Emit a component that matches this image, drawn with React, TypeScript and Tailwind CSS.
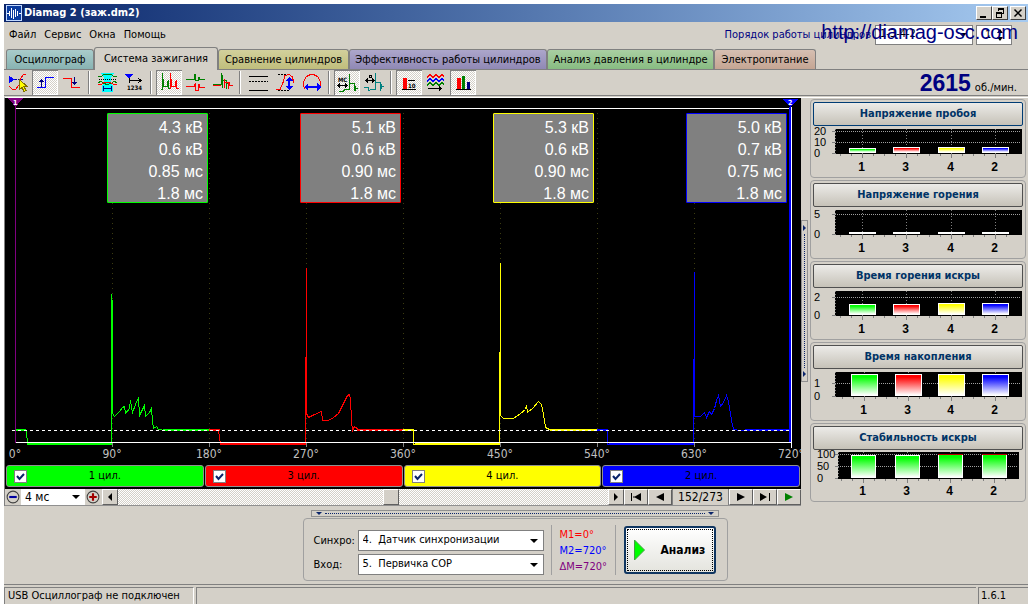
import { useState, type ReactNode } from 'react'

const CYLINDERS = [
  {
    id: 1, color: '#00ff00', box: 'border-[#00ff00]', bar: 'bg-[#00ff00]', spike: 'M106.500 272V346M107.500 207V315',
    values: ['4.3 кВ', '0.6 кВ', '0.85 мс', '1.8 мс'],
    wave: '10,332 21,332 22,346 106,346 106,272 106,346 106,196 107,207 107,315 109,318 114,313 117,309 119,308 120,315 124,310 125,302 127,314 130,306 133,299 134,317 137,311 139,307 140,318 144,314 146,310 147,322 148,330 151,328 153,331 160,332 204,332',
  },
  {
    id: 3, color: '#ff0000', box: 'border-[#ff0000]', bar: 'bg-[#ff0000]', spike: 'M300.500 259V346M301.500 259V315',
    values: ['5.1 кВ', '0.6 кВ', '0.90 мс', '1.8 мс'],
    wave: '204,332 213,332 215,346 300,346 300,259 301,259 301,169 301,315 303,319 309,316 316,313 317,322 323,322 328,319 333,315 338,305 342,297 344,296 345,300 346,322 347,332 349,328 353,331 398,332',
  },
  {
    id: 4, color: '#ffff00', box: 'border-[#ffff00]', bar: 'bg-[#ffff00]', spike: 'M494.500 254V346M495.500 254V317',
    values: ['5.3 кВ', '0.6 кВ', '0.90 мс', '1.8 мс'],
    wave: '398,332 408,332 408,346 494,346 494,256 495,256 495,164 495,317 498,320 508,320 515,315 520,311 521,307 522,314 528,309 533,303 536,306 538,316 540,329 546,332 592,332',
  },
  {
    id: 2, color: '#0000ff', box: 'border-[#0000ff]', bar: 'bg-[#0000ff]', spike: 'M688.500 261V346M689.500 261V318',
    values: ['5.0 кВ', '0.7 кВ', '0.75 мс', '1.8 мс'],
    wave: '592,332 602,332 602,346 688,346 688,262 689,262 689,173 689,318 695,318 699,314 701,319 704,313 706,316 709,310 711,302 713,297 715,308 718,304 721,297 723,303 726,322 728,331 735,332 785,332',
  },
]

const TABS = [
  { label: 'Осциллограф', cls: 'w-[88px] bg-linear-to-b from-[#a9cccb] to-[#88b3b2]' },
  { label: 'Система зажигания', cls: 'w-[124px] bg-[#d4d0c8]', active: true },
  { label: 'Сравнение цилиндров', cls: 'w-[131px] bg-linear-to-b from-[#d2d09c] to-[#c0be7c]' },
  { label: 'Эффективность работы цилиндров', cls: 'w-[198px] bg-linear-to-b from-[#aca6cb] to-[#9089b5]' },
  { label: 'Анализ давления в цилиндре', cls: 'w-[167px] bg-linear-to-b from-[#a9cfa2] to-[#88bc82]' },
  { label: 'Электропитание', cls: 'w-[102px] bg-linear-to-b from-[#d6bfb2] to-[#c5a593]' },
]

const GAUGES = [
  { title: 'Напряжение пробоя', active: true, left: 22, top: 3, bottom: 28, right: 209, scale: [['20', 5], ['10', 16], ['0', 27]], xs: [36, 80, 125, 169], tops: [22, 21, 21, 21], w: 27 },
  { title: 'Напряжение горения', left: 22, top: 3, bottom: 28, right: 209, scale: [['5', 7], ['0', 27]], xs: [36, 80, 125, 169], tops: [25, 25, 25, 25], w: 27 },
  { title: 'Время горения искры', left: 22, top: 3, bottom: 28, right: 209, scale: [['2', 9], ['0', 27]], xs: [36, 80, 125, 169], tops: [16, 16, 15, 15], w: 27 },
  { title: 'Время накопления', left: 22, top: 3, bottom: 28, right: 209, scale: [['1', 14], ['0', 27]], xs: [38, 82, 125, 169], tops: [5, 5, 5, 5], w: 27 },
  { title: 'Стабильность искры', green: true, left: 25, top: 2, bottom: 29, right: 206, scale: [['100', 4], ['50', 16], ['0', 28]], xs: [38, 82, 125, 169], tops: [5, 5, 4, 4], w: 25 },
] as { title: string; active?: boolean; green?: boolean; left: number; top: number; bottom: number; right: number; scale: [string, number][]; xs: number[]; tops: number[]; w: number }[]

const RAISED = 'border border-t-white border-l-white border-r-[#606060] border-b-[#606060] bg-[#d4d0c8]'
const DITHER = 'bg-[repeating-conic-gradient(#ffffff_0_25%,#d4d0c8_0_50%)] bg-[length:2px_2px]'

// toolbar glyphs, drawn in a 26x25 box
const TOOLS: { name: string; pressed?: boolean; art: ReactNode }[][] = [
  [
    {
      name: 'Курсор',
      art: (
        <>
          <path d="M4 6v7l6-3.500z" fill="#0000ff" />
          <path d="M10 9.500h9" stroke="#0000a0" strokeDasharray="2 1" />
          <path d="M4 16l3 3h4l3-4 2-7 2-3 3-1" stroke="#ff0000" />
          <path d="M14.500 9.500v10l2.500-2 2 4 2-1-2-4h3z" fill="#ffff00" stroke="#807000" />
        </>
      ),
    },
    { name: 'Фронт', pressed: true, art: <><path d="M5 17.500h8.500v-10H22" stroke="#0000ff" /><path d="M9.500 17V9M7 11.500h5M8 10.500h3" stroke="#000080" /></> },
    { name: 'Спад', art: <><path d="M4 8.500h8.500v9H21" stroke="#ff0000" /><path d="M15.500 7v8M13 12.500h5M14 13.500h3" stroke="#000080" /></> },
  ],
  [
    {
      name: 'Фаза',
      art: (
        <>
          <path d="M7 3h13l-3 5v5l2 3v6H8v-6l2-3V8z" fill="#00ffff" />
          <path d="M4 6.500h3l3-2h7l3 2h3M4 12.500l3-1 3 2 3 1 4-1 3-2 3 1" stroke="#008000" />
          <path d="M4 14.500h3l3-2h6l4 2h3" stroke="#ff0000" />
          <path d="M5 9.500h18" stroke="#000" strokeDasharray="1 1" />
          <path d="M9.500 16v5M17.500 16v5M9 18.500h9" stroke="#000080" />
        </>
      ),
    },
    {
      name: 'Порядок',
      art: (
        <>
          <path d="M4 4h8L8 9z" fill="#0000ff" />
          <path d="M8.500 8v5M8 10.500h12M17 8l3 2.500-3 2.500" stroke="#000" />
          <text x="6" y="20" fontSize="6" fontWeight="bold" fill="#000">1234</text>
        </>
      ),
    },
  ],
  [
    {
      name: 'Парад', pressed: true,
      art: <><path d="M5 19.500h1.500V3M7.500 9v8M8 16.500h3v-6M12.500 10v9M12 18.500h2" stroke="#008000" /><path d="M14.500 19V3M15.500 9v8M16 16.500h3v-6M20.500 10v8M20 18.500h3" stroke="#ff0000" /></>,
    },
    { name: 'Растр', art: <><path d="M3 9.500h8.500V4M12.500 4v7M13 10.500h2v-4M16.500 7v3M16 9.500h6" stroke="#008000" /><path d="M3 16.500h8.500v-3M12.500 13v8M13 20.500h2v-7M16.500 14v3M16 17.500h6" stroke="#ff0000" /></> },
    { name: 'Наложение', art: <><path d="M3 14.500h8.500V3M12.500 5v13M13 10.500h3v8M16 13.500h4" stroke="#008000" /><path d="M3 15.500h8M14.500 9v9M15 12.500h3v6M19.500 12v4M19 15.500h4" stroke="#ff0000" /></> },
  ],
  [
    { name: 'Линии', art: <><path d="M4 6.500h19M4 20.500h19" stroke="#000" /><path d="M4 11.500h19" stroke="#000" strokeDasharray="2 1" /></> },
    {
      name: 'Высота',
      art: <><path d="M6 4.500h12M6 20.500h12" stroke="#000" strokeDasharray="2 1" /><path d="M4 19.500h4l3-7 2-7 4-1 3 2 2 6" stroke="#ff0000" /><path d="M17 8v11" stroke="#0000ff" strokeWidth="2" /><path d="M13 11l4-4 4 4zM13 16l4 4 4-4z" fill="#0000ff" /></>,
    },
    {
      name: 'Ширина',
      art: <><path d="M6 18.500l-1.500-2v-5l3-5 4-2h3l4 2 3 5v5l-1.500 2" stroke="#ff0000" /><path d="M7 17h14" stroke="#0000ff" strokeWidth="2" /><path d="M9 13l-4 4 4 4zM18 13l4 4-4 4z" fill="#0000ff" /></>,
    },
  ],
  [
    {
      name: 'Метки мс', pressed: true,
      art: <><text x="4" y="12" fontSize="6" fontWeight="bold" fill="#000">МС</text><path d="M4 15.500h9M6 13.500l-2 2 2 2M11 13.500l2 2-2 2" stroke="#000" /><path d="M5 21.500h4l2-2h4.500V4v9M16 13.500h4v7M20 18.500h4M21.500 16v5" stroke="#008000" /></>,
    },
    {
      name: 'Метки градусы',
      art: <><path d="M5 10.500h8M7 8.500l-2 2 2 2M11 8.500l2 2-2 2M8 5.500h2v2H8z" stroke="#000" /><path d="M3 17.500h4v3l4-1h3.500V3v14M15 12.500h4v8M19 16.500h4M20.500 14v5" stroke="#008080" /></>,
    },
  ],
  [
    { name: 'Значения', pressed: true, art: <><path d="M7 8h4v11H7z" fill="#ff0000" /><path d="M6 19.500h14M12 10.500h7" stroke="#000" /><text x="12" y="18" fontSize="6" fontWeight="bold" fill="#000">10</text></> },
    {
      name: 'Тренды',
      art: <><path d="M4 7.500l3-3 3 3 3-3 3 3 3-3 2 2" stroke="#ff0000" /><path d="M4 11.500l3-3 3 3 3-3 3 3 3-3 2 2" stroke="#0000ff" /><path d="M4 15.500l3-3 3 3 3-3 3 3 3-3 2 2" stroke="#008000" /><path d="M5 18.500h13M16 16.500l2 2-2 2" stroke="#000" /></>,
    },
    { name: 'Гистограммы', pressed: true, art: <><path d="M7 8h4v11H7z" fill="#ff0000" /><path d="M12 6h3v13h-3z" fill="#008000" /><path d="M17 12h3v7h-3z" fill="#000080" /><path d="M6 19.500h15" stroke="#000" /></> },
  ],
]

function Combo({ label, options, className }: { label: string; options: string[]; className: string }) {
  return (
    <div className={`relative bg-white ${className}`}>
      <select aria-label={label} className="h-full w-full appearance-none bg-transparent pl-1 pb-px outline-none">
        {options.map(o => <option key={o}>{o}</option>)}
      </select>
      <svg viewBox="0 0 8 4" className="pointer-events-none absolute right-[5px] top-1/2 h-1 w-2 -translate-y-1/2"><path d="M0 0h8L4 4z" /></svg>
    </div>
  )
}

function TitleBar() {
  const btn = 'flex h-[14px] w-4 items-center justify-center border border-t-white border-l-white border-r-[#404040] border-b-[#404040] bg-[#d4d0c8]'
  return (
    <header className="flex h-[18px] items-center bg-linear-to-r from-[#0a246a] to-[#a6caf0] px-[2px]">
      <svg viewBox="0 0 16 16" className="h-4 w-4" shapeRendering="crispEdges">
        <path d="M.5.5h15v15H.5z" fill="#0a3ca0" stroke="#c0d8ff" />
        <path d="M1 8.500h2M3.500 6v5M5.500 3v10M7.500 5v9M9.500 4v8M11.500 6v5M13 8.500h2" stroke="#fff" />
      </svg>
      <h1 className="ml-[2px] flex-1 text-[11px] font-bold text-white">Diamag 2 (заж.dm2)</h1>
      <button aria-label="Свернуть" className={btn}><svg viewBox="0 0 10 10" className="h-[10px] w-[10px]"><path d="M1 8h6v2H1z" /></svg></button>
      <button aria-label="Восстановить" className={btn}>
        <svg viewBox="0 0 10 10" className="h-[10px] w-[10px]" fill="none" stroke="#000" shapeRendering="crispEdges"><path d="M3.500 3V.5h5v5H7M3 1.500h6M1.500 4.500h5v5h-5zM1 5.500h6" /></svg>
      </button>
      <button aria-label="Закрыть" className={`ml-[2px] ${btn}`}>
        <svg viewBox="0 0 10 10" className="h-[10px] w-[10px]" stroke="#000" strokeWidth="1.500"><path d="M1.500 1.500l7 7M8.500 1.500l-7 7" /></svg>
      </button>
    </header>
  )
}

function MenuBar() {
  return (
    <div className="relative flex h-[25px] items-center pl-[5px] pr-4">
      <nav className="flex flex-1 gap-2">
        {['Файл', 'Сервис', 'Окна', 'Помощь'].map(m => <button key={m}>{m}</button>)}
      </nav>
      <span className="mr-1 text-[#000080]">Порядок работы цилиндров</span>
      <Combo label="Порядок работы цилиндров" options={['1-3-4-2', '1-2-4-3']} className="h-5 w-[98px] border border-[#808080]" />
      <div className="ml-[3px] flex h-5 w-9 items-center border border-[#808080] bg-white">
        <input aria-label="Цилиндр" defaultValue="1" className="w-5 pl-2 outline-none" />
        <svg viewBox="0 0 6 14" className="h-[14px] w-[6px]"><path d="M0 5l3-4 3 4zM0 9l3 4 3-4z" /></svg>
      </div>
      <a href="http://diamag-osc.com" className="absolute right-[10px] top-0 font-['Liberation_Sans',sans-serif] text-[20px] leading-5 text-[#000080]">http://diamag-osc.com</a>
    </div>
  )
}

function Tabs() {
  const [current, setCurrent] = useState(1)
  return (
    <div role="tablist" className="flex h-[22px] items-end pl-[2px]">
      {TABS.map((t, i) => (
        <button
          key={t.label}
          role="tab"
          aria-selected={current === i}
          onClick={() => setCurrent(i)}
          className={`shrink-0 whitespace-nowrap rounded-t-[3px] border border-b-0 border-[#808080] ${t.active ? 'relative z-10 -mb-px h-[23px] pb-px' : 'h-5'} ${t.cls}`}
        >
          {t.label}
        </button>
      ))}
    </div>
  )
}

function Toolbar() {
  return (
    <div className="flex h-[27px] items-center border-y border-[#808080] pl-px">
      {TOOLS.map((group, g) => (
        <div key={g} className="flex items-center">
          {g > 0 && <div className="mr-1 ml-[2px] h-[23px] w-[2px] border-l border-[#808080] border-r border-r-white" />}
          {group.map(t => (
            <button
              key={t.name}
              aria-label={t.name}
              aria-pressed={!!t.pressed}
              className={`mr-px h-[25px] w-[26px] ${t.pressed ? `${DITHER} shadow-[inset_1px_1px_0_#808080,inset_-1px_-1px_0_#ffffff]` : ''}`}
            >
              <svg viewBox="0 0 26 25" className="h-[25px] w-[26px]" fill="none" shapeRendering="crispEdges">{t.art}</svg>
            </button>
          ))}
        </div>
      ))}
      <div className="ml-auto mr-[11px] flex items-baseline gap-1">
        <span className="font-['Liberation_Sans',sans-serif] text-[23px] leading-6 font-bold text-[#000080]">2615</span>
        <span>об./мин.</span>
      </div>
    </div>
  )
}

function Oscillogram() {
  return (
    <div className="relative bg-black">
      <svg viewBox="0 0 796 367" className="block w-full" fill="none" shapeRendering="crispEdges">
        {[1, 2, 3, 4, 5, 6, 7].map(i => (
          <g key={i}>
            <path d={`M${10.5 + i * 97} 15V344`} stroke="#3c3c10" strokeDasharray="1 4" />
            <path d={`M${10.5 + i * 97} 344v5`} stroke="#808080" />
          </g>
        ))}
        {CYLINDERS.map((c, i) => (
          <g key={c.id} stroke={c.color}>
            <polyline points={c.wave} transform="translate(0.500 0.500)" />
            <path d={c.spike} />
            {/* dwell and idle levels carry noise, so they read thicker */}
            <path d={`M${22 + i * 194} 346h84M${10 + i * 194} 332h11M${158 + i * 194} 332h46`} strokeWidth="2" />
          </g>
        ))}
        <path d="M10 10.500H787" stroke="#fff" />
        <path d="M10 344.500H787" stroke="#fff" />
        <path d="M7 332.500H787" stroke="#fff" strokeDasharray="3 3" />
        <path d="M10.500 9V345" stroke="#800080" />
        <path d="M785 9V344" stroke="#0000ff" strokeWidth="2" />
        <path d="M786.500 9V350" stroke="#fff" />
        <path d="M3 0h15l-7.500 9z" fill="#800080" />
        <path d="M778 1h15l-7.500 8z" fill="#0000ff" />
        <text x="8" y="7" fontSize="7" fontWeight="bold" fill="#fff">1</text>
        <text x="783" y="7" fontSize="7" fontWeight="bold" fill="#fff">2</text>
        {[0, 90, 180, 270, 360, 450, 540, 630, 720].map((deg, i) => (
          <text key={deg} x={10 + i * 97} y="360" fontSize="12" textAnchor="middle" fill="#c0c0c0">{deg}°</text>
        ))}
      </svg>
      <div className="absolute inset-x-0 top-[15px] grid grid-cols-4 pl-[10px] pr-[14px]">
        {CYLINDERS.map(c => (
          <div key={c.id} className={`h-[90px] w-[101px] justify-self-end rounded-[1px] border bg-[#808080] pt-[3px] pr-1 text-right font-['Liberation_Sans',sans-serif] text-[16px] leading-[22px] text-white ${c.box}`}>
            {c.values.map((v, i) => <div key={i}>{v}</div>)}
          </div>
        ))}
      </div>
    </div>
  )
}

function Channels() {
  return (
    <div className="grid grid-cols-4 gap-px bg-black px-px pb-[2px]">
      {CYLINDERS.map(c => (
        <label key={c.id} className={`relative flex h-[22px] items-center justify-center rounded-[3px] border border-[#909090] ${c.bar}`}>
          <input type="checkbox" defaultChecked className="peer absolute left-[7px] h-[13px] w-[13px] appearance-none border border-[#808080] bg-white" />
          <svg viewBox="0 0 13 13" className="pointer-events-none absolute left-[7px] hidden h-[13px] w-[13px] peer-checked:block" fill="none" stroke="#0a246a" strokeWidth="2"><path d="M3 6l2.500 3L10 4" /></svg>
          {c.id} цил.
        </label>
      ))}
    </div>
  )
}

function NavButton({ label, d, className = 'w-6', fill = '#000' }: { label: string; d: string; className?: string; fill?: string }) {
  return (
    <button aria-label={label} className={`flex h-4 shrink-0 items-center justify-center ${RAISED} ${className}`}>
      <svg viewBox="0 0 12 8" className="h-2 w-3 shrink-0" fill={fill}><path d={d} /></svg>
    </button>
  )
}

function ScrollRow() {
  return (
    <div className="flex h-[17px] border-b border-[#909090]">
      {[['Мельче', '#0000a0', 'M4 7.500h7'], null, ['Крупнее', '#a00000', 'M4 7.500h7M7.500 4v7']].map((z, i) =>
        z ? (
          <button key={i} aria-label={z[0]} className="h-4 w-4 shrink-0">
            <svg viewBox="0 0 15 15" className="h-4 w-4" fill="none"><circle cx="7.500" cy="7.500" r="5.500" stroke="#404040" /><path d={z[2]} stroke={z[1]} strokeWidth="2" /></svg>
          </button>
        ) : (
          <Combo key={i} label="Развёртка" options={['4 мс', '8 мс']} className="h-4 w-16 shrink-0 text-[12px]" />
        ),
      )}
      <NavButton label="Влево" d="M8 0v8L4 4z" className="ml-px w-4" />
      <div className={`flex flex-1 ${DITHER}`}>
        <div className="w-[54%]" />
        <div className={`h-4 w-4 ${RAISED}`} />
      </div>
      <NavButton label="Вправо" d="M4 0v8l4-4z" className="w-4" />
      <NavButton label="В начало" d="M1 0h1v8H1zM3 3.500h2v1H3zM11 0v8L4 4z" />
      <NavButton label="Предыдущий" d="M10 0v8L2 4z" />
      <output className="flex w-[57px] shrink-0 items-center justify-center border-x border-[#808080] text-[12px]">152/273</output>
      <NavButton label="Следующий" d="M2 0v8l8-4z" />
      <NavButton label="В конец" d="M1 0v8l7-4zM10 0h1v8h-1z" />
      <NavButton label="Пуск" d="M2 0v8l8-4z" fill="#008000" />
    </div>
  )
}

function Gauge({ g }: { g: (typeof GAUGES)[number] }) {
  return (
    <section className="rounded-[4px] border border-[#a0a0a0] p-[2px]">
      <button className={`block h-6 w-full rounded-[2px] border bg-linear-to-b from-[#ecebe8] to-[#c6c2b8] text-[11px] font-bold text-[#003366] ${g.active ? 'border-[#003c74]' : 'border-[#505050]'}`}>
        {g.title}
      </button>
      <svg viewBox="0 0 210 49" className="block w-full font-['Liberation_Sans',sans-serif]" shapeRendering="crispEdges">
        <defs>
          {CYLINDERS.map(c => (
            <linearGradient key={c.id} id={`fade${c.id}`} x1="0" y1="0" x2="0" y2="1">
              <stop offset="0.1" stopColor={c.color} />
              <stop offset="1" stopColor="#fff" />
            </linearGradient>
          ))}
        </defs>
        <rect x={g.left} y={g.top} width={g.right - g.left} height={g.bottom - g.top} fill="#000" />
        <path d={`M${g.left + 0.5} ${g.top}V${g.bottom}`} stroke="#808080" strokeDasharray="1 2" />
        {g.scale.map(([label, y]) => (
          <g key={label}>
            <path d={`M${g.left - 3} ${y + 0.5}h3`} stroke="#808080" />
            {label !== '0' && <path d={`M${g.left} ${y + 0.5}H${g.right - 1}`} stroke="#a0a0a0" strokeDasharray="1 1" />}
            <text x={g.green ? 4 : 1} y={y + 4} fontSize="11">{label}</text>
          </g>
        ))}
        {g.xs.map((x, i) => {
          const c = CYLINDERS[i]
          const cx = x + Math.floor(g.w / 2) + 0.5
          return (
            <g key={c.id}>
              <path d={`M${cx} ${g.top}V${g.bottom}`} stroke="#808080" strokeDasharray="1 2" />
              <path d={`M${cx} ${g.bottom}v4M${cx - 22} ${g.bottom}v2M${cx - 11} ${g.bottom}v2M${cx + 11} ${g.bottom}v2`} stroke="#808080" />
              <rect x={x} y={g.tops[i]} width={g.w} height={g.bottom - 1 - g.tops[i]} fill="#fff" />
              {g.bottom - g.tops[i] > 4 && (
                <rect x={x + 1} y={g.tops[i] + 1} width={g.w - 2} height={g.bottom - 3 - g.tops[i]} fill={`url(#fade${g.green ? 1 : c.id})`} />
              )}
              {g.green && i > 1 && <path d={`M${x} ${g.tops[i] + 0.5}h${g.w}`} stroke="#c00000" />}
              <text x={cx - 1} y="45" fontSize="12" fontWeight="bold" textAnchor="middle">{c.id}</text>
            </g>
          )
        })}
      </svg>
    </section>
  )
}

function Controls() {
  return (
    <div className="flex flex-col items-center pt-1 pr-[2px] pb-[3px]">
      <div className="flex h-[7px] w-[408px] items-center justify-between border border-[#909090] px-1">
        <svg viewBox="0 0 6 3" className="h-[3px] w-[6px]" fill="#0a246a"><path d="M0 0h6L3 3z" /></svg>
        <div className="mx-[3px] flex-1 border-t border-dotted border-[#0a246a]" />
        <svg viewBox="0 0 6 3" className="h-[3px] w-[6px]" fill="#0a246a"><path d="M0 0h6L3 3z" /></svg>
      </div>
      <div className="mt-px flex h-[63px] w-[425px] items-center rounded-[4px] border border-[#a0a0a0] pl-[10px]">
        <div className="grid w-[230px] grid-cols-[44px_1fr] items-center gap-y-[3px] pt-[6px]">
          <span>Синхро:</span>
          <Combo label="Синхро" options={['4.\u00a0 Датчик синхронизации']} className="h-[21px] border border-[#808080]" />
          <span>Вход:</span>
          <Combo label="Вход" options={['5.\u00a0 Первичка COP']} className="h-[21px] border border-[#808080]" />
        </div>
        <div className="ml-[7px] flex h-[50px] w-[65px] flex-col justify-end border-x border-[#a0a0a0] pl-2 leading-4">
          <span className="text-[#ff0000]">M1=0°</span>
          <span className="text-[#0000ff]">M2=720°</span>
          <span className="text-[#800080]">ΔM=720°</span>
        </div>
        <button className="ml-2 flex h-12 w-[92px] items-center rounded-[3px] border-2 border-[#0f3560] bg-linear-to-b from-white to-[#e4e4de] p-px text-[12px] font-bold">
          <span className="flex h-full w-full items-center gap-4 border border-dotted border-black pl-[6px]">
            <svg viewBox="0 0 11 20" className="h-5 w-[11px]"><path d="M.5 0v20L10.500 10z" fill="#00ff00" stroke="#40a040" /></svg>
            Анализ
          </span>
        </button>
      </div>
    </div>
  )
}

function Grip() {
  return (
    <div className="flex w-[9px] shrink-0 items-center pr-[2px]">
      <div className="-mt-[2px] flex h-[162px] w-[7px] flex-col items-center justify-between border border-[#909090] py-1">
        <svg viewBox="0 0 3 6" className="h-[6px] w-[3px]" fill="#0a246a"><path d="M0 0l3 3-3 3z" /></svg>
        <div className="my-[3px] flex-1 border-l border-dotted border-[#0a246a]" />
        <svg viewBox="0 0 3 6" className="h-[6px] w-[3px]" fill="#0a246a"><path d="M0 0l3 3-3 3z" /></svg>
      </div>
    </div>
  )
}

export default function App() {
  return (
    <div className="flex min-h-screen flex-col bg-white p-1 font-['DejaVu_Sans_Condensed','DejaVu_Sans',sans-serif] text-[11px] leading-[14px] text-black">
      <div className="flex flex-1 flex-col bg-[#d4d0c8]">
        <TitleBar />
        <MenuBar />
        <Tabs />
        <Toolbar />
        <main className="mt-px flex border-t border-white border-l border-l-[#808080]">
          <div className="min-w-0 flex-1">
            <Oscillogram />
            <Channels />
            <ScrollRow />
          </div>
          <Grip />
          <aside className="mr-[2px] flex w-[216px] shrink-0 flex-col gap-[2px] pt-px">
            {GAUGES.map(g => <Gauge key={g.title} g={g} />)}
          </aside>
        </main>
        <Controls />
        <footer className="mt-auto flex h-5 border-t border-[#808080] pt-[2px]">
          <div className="w-[190px] border-t border-l border-r border-[#808080] border-r-white pl-[3px] pt-px">USB Осциллограф не подключен</div>
          <div className="ml-[2px] flex-1 border-t border-l border-[#808080]" />
          <div className="ml-[2px] w-[50px] border-t border-l border-[#808080] pl-[2px] pt-px">1.6.1</div>
        </footer>
      </div>
    </div>
  )
}
